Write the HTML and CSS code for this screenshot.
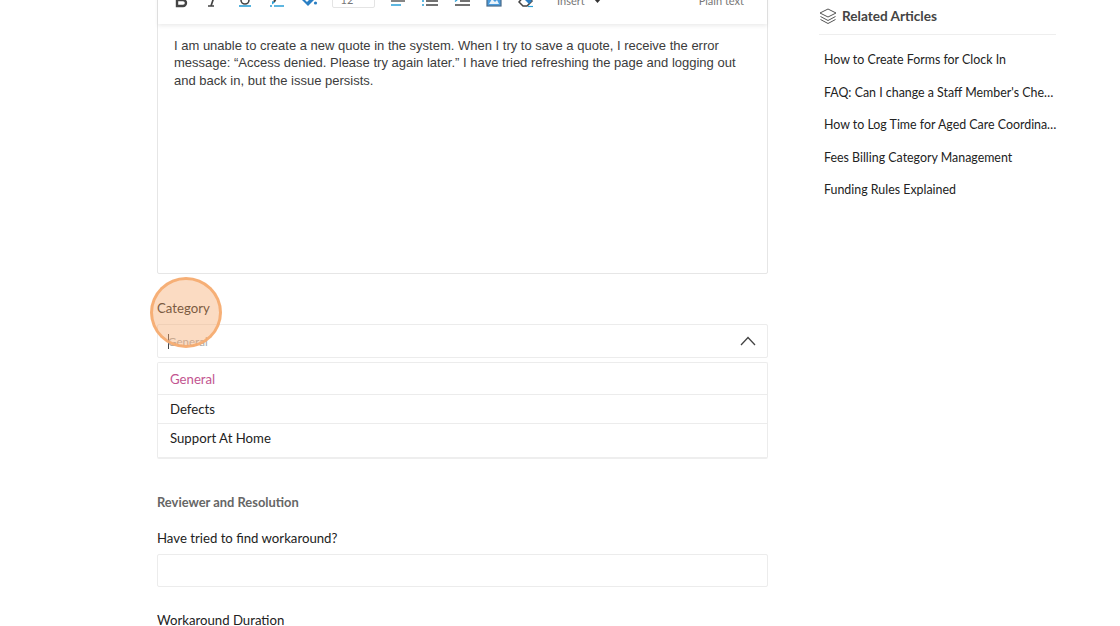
FILE: index.html
```html
<!DOCTYPE html>
<html lang="en">
<head>
<meta charset="utf-8">
<title>New Ticket</title>
<link rel="stylesheet" href="styles.css">
</head>
<body>
<div class="page">
  <main class="form">
    <section class="editor">
      <div class="toolbar">
        <span class="tool"><svg width="14" height="18" viewBox="0 0 14 18"><path class="ink" d="M3 4h5a3 3 0 0 1 0 6H3zM3 10h6a3 3 0 0 1 0 6H3z" fill="none" stroke-width="2.4"/></svg></span>
        <span class="tool"><svg width="12" height="18" viewBox="0 0 12 18"><path class="ink" d="M5 4h6M1 16h6M8 4L4 16" fill="none" stroke-width="1.7"/></svg></span>
        <span class="tool"><svg width="14" height="18" viewBox="0 0 14 18"><path class="ink" d="M3 4v6a4 4 0 0 0 8 0V4" fill="none" stroke-width="1.6"/><path class="blue" d="M1 16h12" fill="none" stroke-width="1.6"/></svg></span>
        <span class="tool"><svg width="16" height="18" viewBox="0 0 16 18"><path class="ink" d="M10 3L5 12" fill="none" stroke-width="2"/><path class="blue" d="M1 16h2M5 16h10" fill="none" stroke-width="1.6"/><path d="M3 11l3 1.4-3 2z" fill="#2a9fd6"/></svg></span>
        <span class="tool"><svg width="18" height="18" viewBox="0 0 18 18"><path d="M1 9l6-6 7 7-6 6z" fill="#2a7fc4"/><path d="M5 9l2 2 4-4" fill="none" stroke="#fff" stroke-width="1.4"/><circle cx="15.5" cy="13" r="1.6" fill="#2a7fc4"/></svg></span>
        <span class="select"><span class="select-value">12</span><svg width="5" height="3" viewBox="0 0 6 4"><path d="M0 0h6L3 4z" fill="#888"/></svg></span>
        <span class="tool"><svg width="14" height="18" viewBox="0 0 14 18"><path class="ink" d="M0 11h14" fill="none" stroke-width="1.3"/><path class="blue" d="M0 15h10" fill="none" stroke-width="1.5"/></svg></span>
        <span class="tool"><svg width="16" height="18" viewBox="0 0 16 18"><path class="ink" d="M4 11h12M4 15h12" fill="none" stroke-width="1.3"/><path class="blue" d="M0 11h2M0 15h2" fill="none" stroke-width="1.5"/></svg></span>
        <span class="tool"><svg width="16" height="18" viewBox="0 0 16 18"><path class="ink" d="M6 11h10M1 15h15" fill="none" stroke-width="1.4"/><path class="blue" d="M4 9l-3 2.5" fill="none" stroke-width="1.3"/></svg></span>
        <span class="tool"><svg width="16" height="18" viewBox="0 0 16 18"><rect x="1" y="3" width="14" height="13" fill="#4a9bdc" stroke="#4a6a88" stroke-width="1.2"/><path d="M3 14l3-5 3 3 2-2 2 4z" fill="#e8f3fb"/></svg></span>
        <span class="tool"><svg width="16" height="18" viewBox="0 0 16 18"><path d="M1 12l6-7 7 6-5 5H5z" fill="none" stroke="#444" stroke-width="1.5"/><path d="M8 5l6 6-3 3-6-6z" fill="#2a7fc4"/><path class="blue" d="M10 16.5h5" fill="none" stroke-width="1.2"/></svg></span>
        <span class="insert">Insert<svg width="7" height="4" viewBox="0 0 7 4"><path d="M0 0h7L3.5 4z" fill="#333"/></svg></span>
        <span class="plain">Plain text</span>
      </div>
      <div class="editor-body">I am unable to create a new quote in the system. When I try to save a quote, I receive the error message: “Access denied. Please try again later.” I have tried refreshing the page and logging out and back in, but the issue persists.</div>
    </section>

    <section class="category">
      <label class="label">Category</label>
      <div class="combo">
        <span class="caret"></span><span class="placeholder">General</span>
        <svg class="chevron" width="16" height="10" viewBox="0 0 16 10"><path d="M1 9l7-7.5L15 9" fill="none" stroke="#444" stroke-width="1.3"/></svg>
      </div>
      <ul class="options">
        <li class="option active">General</li>
        <li class="option">Defects</li>
        <li class="option last">Support At Home</li>
      </ul>
      <span class="spot"></span>
    </section>

    <h2 class="section-title">Reviewer and Resolution</h2>
    <label class="label">Have tried to find workaround?</label>
    <div class="field"></div>
    <label class="label duration">Workaround Duration</label>
  </main>

  <aside class="side">
    <h3 class="side-title">
      <svg width="18" height="17" viewBox="0 0 18 17"><g fill="none" stroke="#555" stroke-width="1"><path d="M9 1l8 4-8 4-8-4z"/><path d="M1.5 8.5L9 12.5l7.5-4"/><path d="M1.5 11.5L9 15.5l7.5-4"/></g></svg>
      Related Articles
    </h3>
    <ul class="articles">
      <li>How to Create Forms for Clock In</li>
      <li>FAQ: Can I change a Staff Member's Check In Time</li>
      <li>How to Log Time for Aged Care Coordination Tasks</li>
      <li>Fees Billing Category Management</li>
      <li>Funding Rules Explained</li>
    </ul>
  </aside>
</div>
</body>
</html>
```
FILE: styles.css
```css
* { box-sizing: border-box; }
html, body { margin: 0; height: 100%; overflow: hidden; background: #fff; }
body { font-family: Lato, "Liberation Sans", sans-serif; font-size: 13.2px; color: #222; }
ul { list-style: none; margin: 0; padding: 0; }

.page { display: flex; align-items: flex-start; padding-left: 157px; }
.form { width: 611px; flex: none; }
.side { width: 236px; margin-left: 52px; flex: none; }

.editor { margin-top: -22px; border: 1px solid #e6e6e6; border-radius: 2px; }
.toolbar {
  height: 45px; display: flex; align-items: center; padding: 0 23px 6px 7px;
  background: #fff; box-shadow: 0 2px 4px rgba(0,0,0,.08); position: relative;
  font-size: 11px; color: #777;
}
.tool { width: 32px; display: flex; justify-content: center; align-items: center; flex: none; }
.ink { stroke: #444; }
.blue { stroke: #2a9fd6; }
.select {
  width: 43px; height: 18px; margin: 0 7px; border: 1px solid #e4e4e4; border-radius: 2px;
  display: flex; align-items: center; justify-content: center; gap: 8px; flex: none;
}
.select-value { padding-top: 2px; }
.insert { margin-left: 15px; display: flex; align-items: center; gap: 9px; padding-top: 4px; }
.plain { margin-left: auto; padding-top: 4px; }
.editor-body {
  height: 249px; padding: 13px 16px; font-family: "Liberation Sans", Arial, sans-serif;
  font-size: 13px; line-height: 17.3px; color: #3c3c3c;
}

.category { position: relative; margin-top: 26px; }
.label { display: block; font-size: 13.2px; line-height: 17px; color: #222; }
.combo {
  position: relative; height: 34px; margin-top: 7px; border: 1px solid #ececec; border-radius: 2px;
  display: flex; align-items: center; padding-left: 10px;
}
.caret { width: 1px; height: 15px; background: #444; }
.placeholder { margin-left: -1px; font-size: 11.6px; color: #aaa; }
.chevron { margin-left: auto; margin-right: 11px; }
.options {
  margin-top: 4px; border: 1px solid #ececec; border-bottom: 2px solid #eee; border-radius: 2px;
}
.option { height: 29px; padding: 0 12px; display: flex; align-items: center; border-bottom: 1px solid #ececec; }
.option.last { border-bottom: 0; height: 33px; padding-bottom: 5px; }
.option.active { color: #c25590; height: 32px; }
.spot {
  position: absolute; left: -7px; top: -23px; width: 72px; height: 71px; border-radius: 50%;
  border: 3px solid rgba(245,170,110,.9); background: rgba(245,170,110,.42);
}

.section-title { margin: 35px 0 0; font-size: 12.9px; line-height: 17px; font-weight: 700; color: #666; }
.section-title + .label { margin-top: 19px; }
.field { height: 33px; margin-top: 7px; border: 1px solid #ececec; border-radius: 2px; }
.duration { margin-top: 25px; }

.side-title {
  margin: 7px 0 0 -1px; height: 28px; padding-bottom: 9px; border-bottom: 1px solid #eee;
  display: flex; align-items: center; gap: 5px; font-size: 13.6px; font-weight: 700; color: #444;
}
.articles { margin: 9px -2px 0 0; padding-left: 4px; }
.articles li {
  height: 32.6px; line-height: 32.6px; font-size: 12.4px; color: #222;
  white-space: nowrap; overflow: hidden; text-overflow: ellipsis;
}
```
